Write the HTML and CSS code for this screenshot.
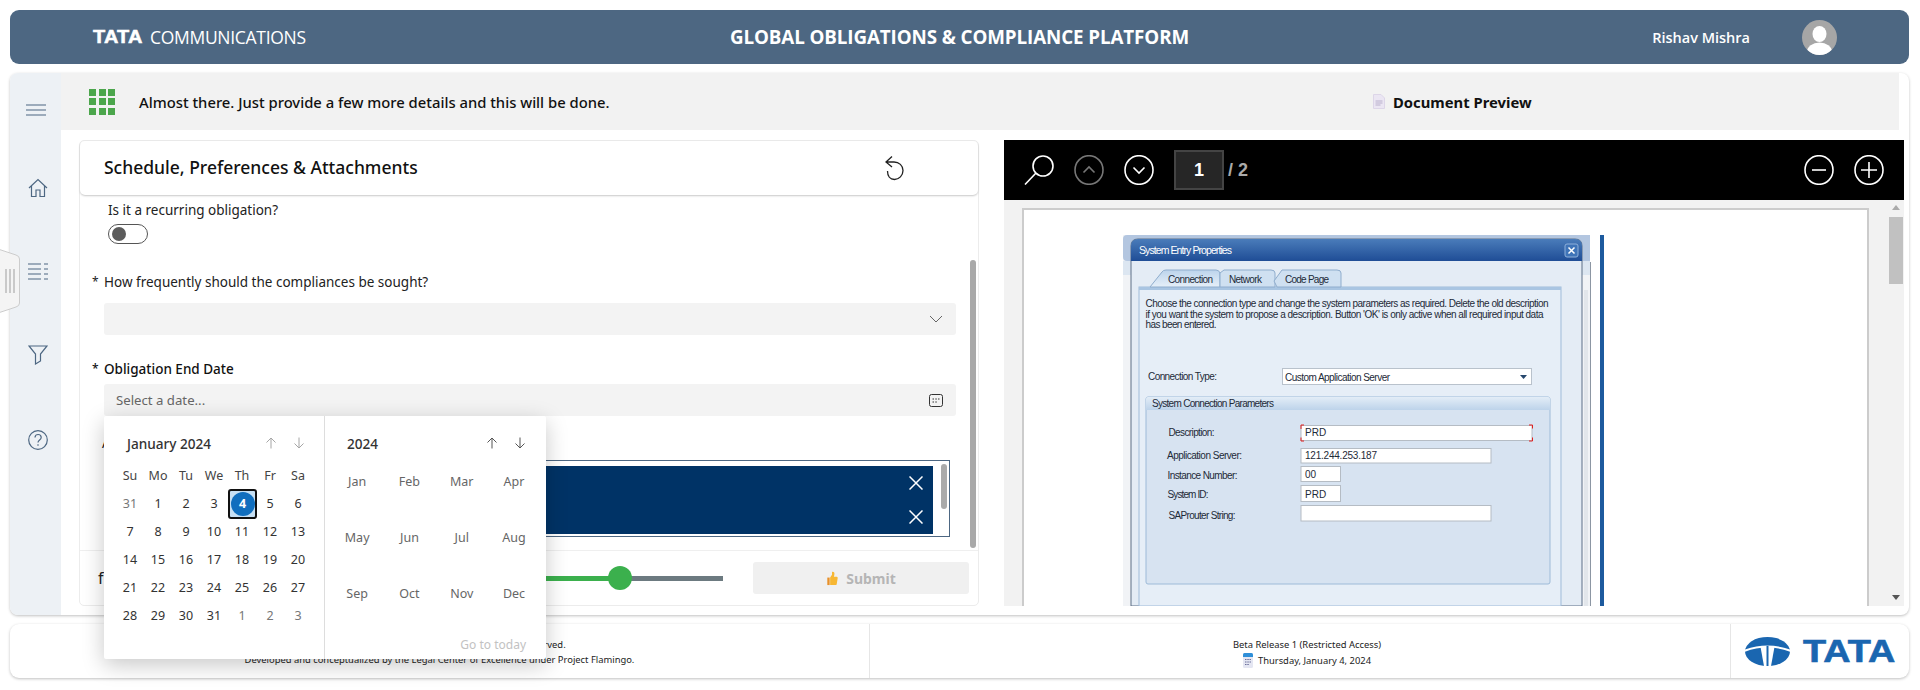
FILE: index.html
```html
<!DOCTYPE html>
<html lang="en">
<head>
    <meta charset="UTF-8">
    <meta name="viewport" content="width=device-width, initial-scale=1.0">
    <title>Global Obligations &amp; Compliance Platform</title>
    <link rel="stylesheet" href="styles.css">
</head>
<body>
<div class="app">
    <header class="topbar">
        <div class="brand"><span class="brand-tata">TATA</span><span class="brand-name">COMMUNICATIONS</span></div>
        <div class="app-title">GLOBAL OBLIGATIONS &amp; COMPLIANCE PLATFORM</div>
        <div class="user">
            <span class="user-name">Rishav Mishra</span>
            <svg class="avatar" viewBox="0 0 35 35">
                <defs><clipPath id="avatarClip"><circle cx="17.5" cy="17.5" r="17.5"/></clipPath></defs>
                <circle cx="17.5" cy="17.5" r="17.5" fill="#a6a6a6"/>
                <g clip-path="url(#avatarClip)" fill="#fff">
                    <ellipse cx="17.5" cy="14" rx="7" ry="8"/>
                    <ellipse cx="17.5" cy="32" rx="12.5" ry="9.5"/>
                </g>
            </svg>
        </div>
    </header>

    <main class="main">
        <nav class="sidebar">
            <svg class="nav-icon nav-menu" viewBox="0 0 20 12"><path d="M0 1h20M0 6h20M0 11h20"/></svg>
            <svg class="nav-icon nav-home" viewBox="0 0 20 20"><path d="M1 10 10 1.500 19 10M3.500 8v10.500h4.500v-6.500h4v6.500h4.500V8"/></svg>
            <svg class="nav-icon nav-list" viewBox="0 0 20 18"><path d="M0 1h13M16 1h4M0 6h13M16 6h4M0 11h13M16 11h4M0 16h13M16 16h4"/></svg>
            <svg class="nav-icon nav-filter" viewBox="0 0 20 20"><path d="M1 1h18l-6.500 8v7L7.500 19V9z"/></svg>
            <svg class="nav-icon nav-help" viewBox="0 0 20 20"><circle cx="10" cy="10" r="9.300"/><path d="M7 7.500c0-4 6.200-4 6.200 0 0 2.500-3.200 2.500-3.200 5"/><path d="M10 14.200v1.600"/></svg>
        </nav>
        <svg class="side-handle" viewBox="0 0 21 66">
            <path d="M-2 1 16 7q3.500 1 3.500 4v44q0 3-3.500 4L-2 65z" fill="#f4f4f4" stroke="#ccc"/>
            <path d="M6 21v24M10 21v24M14 21v24" stroke="#bbb" stroke-width="1.500"/>
        </svg>

        <div class="content">
            <div class="notice">
                <div class="notice-left">
                    <div class="grid-icon">
                        <i></i><i></i><i></i><i></i><i></i><i></i><i></i><i></i><i></i>
                    </div>
                    <span class="notice-text">Almost there. Just provide a few more details and this will be done.</span>
                </div>
                <div class="notice-right">
                    <svg class="doc-icon" viewBox="0 0 12 15">
                        <path d="M.5.5h7.500l3.500 3.500v10.500H.5z" fill="#ebe6f3" stroke="#ddd6e8"/>
                        <path d="M2.500 7h7M2.500 9h7M2.500 11h5" stroke="#b9b0cc"/>
                    </svg>
                    <span>Document Preview</span>
                </div>
            </div>

            <div class="panes">
                <section class="form-panel">
                    <div class="form-head">
                        <h2>Schedule, Preferences &amp; Attachments</h2>
                        <svg class="undo-icon" viewBox="0 0 22 26"><path d="M8 1.500 2 7l6 5M2 7h8c5 0 9 3.500 9 8.500S15 24.500 10.500 24.500 3.500 21 3.500 16"/></svg>
                    </div>

                    <div class="form-body">
                        <div class="field-label plain">Is it a recurring obligation?</div>
                        <div class="toggle"><i></i></div>

                        <div class="field-label starred q-freq"><span class="star">*</span>How frequently should the compliances be sought?</div>
                        <div class="input select-box">
                            <svg class="chev" viewBox="0 0 14 8"><path d="M1 1l6 6 6-6"/></svg>
                        </div>

                        <div class="field-label starred q-date"><span class="star">*</span>Obligation End Date</div>
                        <div class="date-wrap">
                            <div class="input date-box">
                                <span>Select a date...</span>
                                <svg class="cal-icon" viewBox="0 0 14 13"><rect x=".5" y=".5" width="13" height="12" rx="2"/><path d="M3.500 5h1.500M6.300 5h1.500M9 5h1.500M3.500 8h1.500M6.300 8h1.500"/></svg>
                            </div>
                            <div class="calendar">
                                <div class="cal-days">
                                    <div class="cal-head">
                                        <span class="cal-title">January 2024</span>
                                        <span class="cal-arrows">
                                            <svg class="arrow faded" viewBox="0 0 12 12"><path d="M6 11.500V1M1.500 5.500 6 1l4.500 4.500"/></svg>
                                            <svg class="arrow faded" viewBox="0 0 12 12"><path d="M6 .5V11M1.500 6.500 6 11l4.500-4.500"/></svg>
                                        </span>
                                    </div>
                                    <div class="day-grid">
                                        <span class="dow">Su</span><span class="dow">Mo</span><span class="dow">Tu</span><span class="dow">We</span><span class="dow">Th</span><span class="dow">Fr</span><span class="dow">Sa</span>
                                        <span class="off">31</span><span>1</span><span>2</span><span>3</span><span class="today"><b>4</b></span><span>5</span><span>6</span>
                                        <span>7</span><span>8</span><span>9</span><span>10</span><span>11</span><span>12</span><span>13</span>
                                        <span>14</span><span>15</span><span>16</span><span>17</span><span>18</span><span>19</span><span>20</span>
                                        <span>21</span><span>22</span><span>23</span><span>24</span><span>25</span><span>26</span><span>27</span>
                                        <span>28</span><span>29</span><span>30</span><span>31</span><span class="off">1</span><span class="off">2</span><span class="off">3</span>
                                    </div>
                                </div>
                                <div class="cal-months">
                                    <div class="cal-head">
                                        <span class="cal-title">2024</span>
                                        <span class="cal-arrows">
                                            <svg class="arrow" viewBox="0 0 12 12"><path d="M6 11.500V1M1.500 5.500 6 1l4.500 4.500"/></svg>
                                            <svg class="arrow" viewBox="0 0 12 12"><path d="M6 .5V11M1.500 6.500 6 11l4.500-4.500"/></svg>
                                        </span>
                                    </div>
                                    <div class="month-grid">
                                        <span>Jan</span><span>Feb</span><span>Mar</span><span>Apr</span>
                                        <span>May</span><span>Jun</span><span>Jul</span><span>Aug</span>
                                        <span>Sep</span><span>Oct</span><span>Nov</span><span>Dec</span>
                                    </div>
                                    <div class="go-today">Go to today</div>
                                </div>
                            </div>
                        </div>

                        <div class="field-label q-attach">A</div>
                        <div class="attach-box">
                            <div class="attach-files">
                                <div class="attach-row"><svg class="close-x" viewBox="0 0 14 14"><path d="M.5.5l13 13M13.500.5l-13 13"/></svg></div>
                                <div class="attach-row"><svg class="close-x" viewBox="0 0 14 14"><path d="M.5.5l13 13M13.500.5l-13 13"/></svg></div>
                            </div>
                            <div class="attach-thumb"></div>
                        </div>

                        <div class="form-scroll"></div>
                    </div>

                    <div class="form-foot">
                        <span class="foot-text">f</span>
                        <div class="slider">
                            <div class="slider-fill" style="width: 65.7%"></div>
                            <div class="slider-knob" style="left: 65.7%"></div>
                        </div>
                        <button class="submit" type="button">
                            <svg class="thumb-icon" viewBox="0 0 12 16"><path d="M1 7h2.500v8H1z" fill="#e8912a"/><path d="M4 7l2-3V1c2-.5 3 1 2.500 3L8 6h3c1 0 1.200 1 1 2l-1 6c-.2.800-.8 1-1.500 1H4z" fill="#f7b733"/></svg>
                            Submit
                        </button>
                    </div>
                </section>

                <section class="viewer">
                    <div class="viewer-bar">
                        <svg class="tool search" viewBox="0 0 30 30"><circle cx="19" cy="11" r="10"/><path d="M12 18 1 29.500"/></svg>
                        <svg class="tool dim" viewBox="0 0 30 30"><ellipse cx="15" cy="15" rx="14" ry="14.300"/><path d="M9.500 17.500 15 12l5.500 5.500"/></svg>
                        <svg class="tool" viewBox="0 0 30 30"><ellipse cx="15" cy="15" rx="14" ry="14.300"/><path d="M9.500 12.500 15 18l5.500-5.500"/></svg>
                        <span class="page-box">1</span>
                        <span class="page-total">/ 2</span>
                        <svg class="tool zoom-out" viewBox="0 0 30 30"><ellipse cx="15" cy="15" rx="14" ry="14.300"/><path d="M8 15h14"/></svg>
                        <svg class="tool" viewBox="0 0 30 30"><ellipse cx="15" cy="15" rx="14" ry="14.300"/><path d="M7 15h16M15 7v16"/></svg>
                    </div>
                    <div class="viewer-scroll">
                        <div class="doc-area">
                            <div class="doc-page">
                                <svg class="shot" viewBox="1123 235 482 371">
                                    <defs>
                                        <linearGradient id="titleBar" x1="0" y1="0" x2="0" y2="1"><stop offset="0" stop-color="#4a7cba"/><stop offset="1" stop-color="#1f4d96"/></linearGradient>
                                        <linearGradient id="tabOn" x1="0" y1="0" x2="0" y2="1"><stop offset="0" stop-color="#bcd4ec"/><stop offset="1" stop-color="#e6eff8"/></linearGradient>
                                        <linearGradient id="groupHead" x1="0" y1="0" x2="0" y2="1"><stop offset="0" stop-color="#e3edf7"/><stop offset="1" stop-color="#bdd3ea"/></linearGradient>
                                    </defs>
                                    <rect x="1123" y="235" width="478" height="371" fill="#f1f3f6"/>
                                    <rect x="1123" y="235" width="472" height="26" rx="4" fill="#b3c6e0"/>
                                    <rect x="1123" y="261" width="468" height="14" fill="#dce6f1"/>
                                    <rect x="1590" y="235" width="10" height="371" fill="#fff"/>
                                    <rect x="1590" y="262" width="1" height="344" fill="#8c96a3"/>
                                    <rect x="1600" y="235" width="4" height="371" fill="#1d5a9e"/>
                                    <rect x="1584" y="290" width="4" height="316" fill="#e2e6eb"/>
                                    <path d="M1131 606V246q0-7 7-7h437q7 0 7 7v360z" fill="#e4ecf5" stroke="#5c6f86"/>
                                    <path d="M1131 261v-15q0-7 7-7h437q7 0 7 7v15z" fill="url(#titleBar)"/>
                                    <text class="s-title" x="1139" y="254" textLength="93">System Entry Properties</text>
                                    <rect x="1565" y="244" width="13" height="13" rx="2" fill="#3f74b8" stroke="#8fb0da"/>
                                    <path d="M1568.500 247.500l6 6M1574.500 247.500l-6 6" stroke="#fff" stroke-width="1.500"/>

                                    <rect x="1139" y="287" width="422" height="319" fill="#e6eef7" stroke="#9fbbd9"/>
                                    <rect x="1139" y="287" width="422" height="3" fill="#a9c5e2"/>
                                    <path d="M1150 287l12-15q1-2 4-2h50q3 0 4 3v14z" fill="url(#tabOn)" stroke="#8fadcd"/>
                                    <path d="M1220 287v-14l4-3h47q4 0 4 3v14z" fill="#cfe0f1" stroke="#8fadcd"/>
                                    <path d="M1277 287l-3-6 8-11h55q4 0 4 3v14z" fill="#cfe0f1" stroke="#8fadcd"/>
                                    <text class="s-text" x="1168" y="283" textLength="45">Connection</text>
                                    <text class="s-text" x="1229" y="283" textLength="33">Network</text>
                                    <text class="s-text" x="1285" y="283" textLength="44">Code Page</text>

                                    <text class="s-text" x="1145.500" y="306.500" textLength="403">Choose the connection type and change the system parameters as required. Delete the old description</text>
                                    <text class="s-text" x="1145.500" y="317.500" textLength="398">if you want the system to propose a description. Button 'OK' is only active when all required input data</text>
                                    <text class="s-text" x="1145.500" y="328" textLength="71">has been entered.</text>

                                    <text class="s-text" x="1148" y="380" textLength="69">Connection Type:</text>
                                    <rect x="1282.500" y="368.500" width="249" height="16" fill="#fff" stroke="#b9c2cc"/>
                                    <text class="s-text" x="1285" y="381" textLength="105">Custom Application Server</text>
                                    <path d="M1520 375h7l-3.500 4z" fill="#26476d"/>

                                    <rect x="1146" y="397" width="404" height="187" rx="2" fill="#d7e3f1" stroke="#9dbad8"/>
                                    <path d="M1146 410v-11q0-2 2-2h400q2 0 2 2v11z" fill="url(#groupHead)"/>
                                    <text class="s-text" x="1152" y="407" textLength="122">System Connection Parameters</text>

                                    <text class="s-text" x="1168.500" y="436" textLength="46">Description:</text>
                                    <rect class="s-input" x="1301" y="425.500" width="231" height="15"/>
                                    <text class="s-text" x="1305" y="436">PRD</text>
                                    <path d="M1301 429v-4h3M1529 425h3.500v3.500M1301 437.500v3.500h3M1529 441h3.500v-3.500" fill="none" stroke="#e02020"/>

                                    <text class="s-text" x="1167" y="459" textLength="75">Application Server:</text>
                                    <rect class="s-input" x="1301" y="448.500" width="190" height="14.500"/>
                                    <text class="s-text" x="1305" y="459" textLength="72">121.244.253.187</text>

                                    <text class="s-text" x="1167.500" y="478.500" textLength="70">Instance Number:</text>
                                    <rect class="s-input" x="1301" y="466.500" width="39.500" height="15"/>
                                    <text class="s-text" x="1305" y="478">00</text>

                                    <text class="s-text" x="1167.500" y="497.500" textLength="41">System ID:</text>
                                    <rect class="s-input" x="1301" y="485.500" width="39.500" height="16"/>
                                    <text class="s-text" x="1305" y="497.500">PRD</text>

                                    <text class="s-text" x="1168.500" y="519" textLength="67">SAProuter String:</text>
                                    <rect class="s-input" x="1301" y="505.500" width="190" height="15.500"/>
                                </svg>
                            </div>
                        </div>
                        <div class="vbar">
                            <i class="vbar-up"></i>
                            <div class="vbar-thumb"></div>
                            <i class="vbar-down"></i>
                        </div>
                    </div>
                </section>
            </div>
        </div>
    </main>

    <footer class="footer">
        <div class="foot-cell foot-legal">
            <div>© 2024 Tata Communications Limited. All rights reserved.</div>
            <div>Developed and conceptualized by the Legal Center of Excellence under Project Flamingo.</div>
        </div>
        <div class="foot-cell foot-release">
            <div>Beta Release 1 (Restricted Access)</div>
            <div class="foot-date">
                <svg class="mini-cal" viewBox="0 0 10 15"><rect width="10" height="15" rx="1.500" fill="#e4e6f2"/><path d="M0 1.500Q0 0 1.500 0h7Q10 0 10 1.500V4H0z" fill="#2f8fd8"/><path d="M2 6.500h1.500M4.300 6.500h1.500M6.500 6.500h1.500M2 9h1.500M4.300 9h1.500M6.500 9h1.500M2 11.500h1.500M4.300 11.500h1.500" stroke="#6b6f9a"/></svg>
                Thursday, January 4, 2024
            </div>
        </div>
        <div class="foot-logo">
            <svg class="tata-mark" viewBox="0 0 45 29">
                <ellipse cx="22.500" cy="14.500" rx="22.500" ry="14.500" fill="#1a66b0"/>
                <path d="M-1 14Q22.500 5 46 14" fill="none" stroke="#fff" stroke-width="2"/>
                <path d="M15.500 10 19 29h7l3.500-19Q22.500 8.500 15.500 10z" fill="#fff"/>
                <path d="M21.500 8.800h2V31h-2z" fill="#1a66b0"/>
            </svg>
            <span class="tata-word">TATA</span>
        </div>
    </footer>
</div>
</body>
</html>
```

FILE: styles.css
```css
* {
    box-sizing: border-box;
}

body {
    margin: 0;
    background: #fff;
    font-family: "Noto Sans", "Open Sans", Arial, sans-serif;
    color: #222;
    overflow: hidden;
}

.app {
    display: flex;
    flex-direction: column;
    gap: 9px;
    width: 1920px;
    height: 690px;
    padding: 10px 11px 0 10px;
}

/* top bar */
.topbar {
    display: grid;
    grid-template-columns: 1fr auto 1fr;
    align-items: center;
    height: 54px;
    background: #4d6782;
    border-radius: 9px;
    color: #fff;
}

.brand {
    display: flex;
    align-items: center;
    gap: 7px;
    padding-left: 83px;
}

.brand-tata {
    font-family: "Liberation Sans", Arial, sans-serif;
    font-weight: 700;
    font-size: 17.5px;
    letter-spacing: 0.2px;
    -webkit-text-stroke: 0.5px #fff;
    transform: scaleX(1.14);
    transform-origin: left center;
    width: 50px;
}

.brand-name {
    font-family: "Open Sans", sans-serif;
    font-size: 17.5px;
    letter-spacing: -0.3px;
}

.app-title {
    font-family: "Open Sans", sans-serif;
    font-weight: 700;
    font-size: 18.8px;
    letter-spacing: -0.1px;
}

.user {
    display: flex;
    align-items: center;
    justify-content: flex-end;
    gap: 52px;
    padding-right: 72px;
}

.user-name {
    font-family: "Open Sans", sans-serif;
    font-weight: 600;
    font-size: 14.5px;
}

.avatar {
    width: 35px;
    height: 35px;
}

/* main card */
.main {
    position: relative;
    display: flex;
    height: 542px;
    background: #fff;
    border-radius: 8px;
    box-shadow: 0 1px 3px rgba(0, 0, 0, 0.25);
}

.sidebar {
    display: flex;
    flex-direction: column;
    align-items: flex-start;
    flex: 0 0 51px;
    padding-left: 18px;
    background: #edf1f5;
    border-radius: 8px 0 0 8px;
}

.nav-icon {
    fill: none;
    stroke: #4d6782;
    stroke-width: 1.2;
}

.nav-menu {
    width: 20px;
    height: 12px;
    margin: 31px 0 0 -2px;
}

.nav-home {
    width: 20px;
    height: 20px;
    margin-top: 62px;
}

.nav-list {
    width: 20px;
    height: 18px;
    margin-top: 65px;
}

.nav-filter {
    width: 20px;
    height: 20px;
    margin-top: 64px;
}

.nav-help {
    width: 20px;
    height: 20px;
    margin-top: 65px;
}

.side-handle {
    position: absolute;
    left: -10px;
    top: 175px;
    width: 21px;
    height: 66px;
}

.content {
    display: flex;
    flex-direction: column;
    flex: 1;
    min-width: 0;
}

/* notice row */
.notice {
    display: grid;
    grid-template-columns: 1312px 1fr;
    align-items: center;
    height: 57px;
    margin-right: 10px;
    background: #f2f2f2;
    font-size: 14.8px;
    font-weight: 500;
    color: #111;
}

.notice-left {
    display: flex;
    align-items: center;
    gap: 24px;
    padding-left: 28px;
}

.grid-icon {
    display: grid;
    grid-template-columns: repeat(3, 7px);
    grid-auto-rows: 7px;
    gap: 2.5px;
}

.grid-icon i {
    background: #4ca64c;
}

.notice-right {
    display: flex;
    align-items: center;
    gap: 8px;
    font-weight: 700;
}

.doc-icon {
    width: 12px;
    height: 15px;
}

/* panes */
.panes {
    display: flex;
    flex: 1;
    min-height: 0;
    padding: 10px 0 9px 18px;
    gap: 25px;
}

.form-panel {
    display: flex;
    flex-direction: column;
    flex: 0 0 900px;
    border: 1px solid #ececec;
    border-radius: 5px;
}

.form-head {
    display: flex;
    align-items: center;
    justify-content: space-between;
    flex: 0 0 54px;
    padding: 0 72px 3px 24px;
    border-radius: 5px;
    box-shadow: 0 1px 2px rgba(0, 0, 0, 0.22);
}

.form-head h2 {
    margin: 0;
    font-size: 17.5px;
    font-weight: 500;
    color: #111;
}

.undo-icon {
    width: 22px;
    height: 26px;
    margin-top: 3px;
    fill: none;
    stroke: #222;
    stroke-width: 1.3;
}

.form-body {
    position: relative;
    flex: 1;
    padding-left: 24px;
}

.field-label {
    height: 20px;
    font-size: 13.5px;
    line-height: 20px;
    color: #222;
}

.plain {
    margin-top: 5px;
    padding-left: 4px;
}

.starred {
    display: flex;
    margin-left: -12px;
}

.star {
    flex: 0 0 12px;
    font-size: 12px;
}

.q-freq {
    margin-top: 28px;
}

.q-date {
    margin-top: 24px;
    font-weight: 500;
    color: #111;
}

.q-attach {
    margin-top: 17px;
    margin-left: -2px;
    color: #111;
}

.toggle {
    width: 40px;
    height: 20px;
    margin: 4px 0 0 4px;
    padding: 2px 3px;
    border: 1px solid #555;
    border-radius: 10px;
}

.toggle i {
    display: block;
    width: 14px;
    height: 14px;
    border-radius: 50%;
    background: #5c5c5c;
}

.input {
    display: flex;
    align-items: center;
    justify-content: space-between;
    width: 852px;
    height: 32px;
    padding: 0 13px 0 12px;
    background: #f3f3f3;
    border-radius: 3px;
    font-size: 13.2px;
    color: #666;
}

.select-box {
    margin-top: 11px;
    justify-content: flex-end;
    padding-right: 13px;
}

.chev {
    width: 14px;
    height: 8px;
    fill: none;
    stroke: #666;
}

.date-wrap {
    position: relative;
    margin-top: 5px;
}

.cal-icon {
    width: 14px;
    height: 13px;
    fill: none;
    stroke: #333;
}

/* calendar popup */
.calendar {
    position: absolute;
    left: 0;
    top: 100%;
    z-index: 5;
    display: flex;
    width: 442px;
    height: 243px;
    background: #fff;
    border-radius: 2px;
    box-shadow: 0 6px 22px rgba(0, 0, 0, 0.22);
    font-size: 12.5px;
    color: #333;
}

.cal-days {
    flex: 0 0 221px;
    padding: 14px 0 0 12px;
    border-right: 1px solid #ddd;
}

.cal-months {
    position: relative;
    flex: 1;
    padding: 14px 0 0 6px;
}

.cal-head {
    display: flex;
    align-items: center;
    justify-content: space-between;
    height: 26px;
    padding: 0 19px 0 11px;
}

.cal-months .cal-head {
    padding: 0 20px 0 16px;
}

.cal-title {
    font-size: 13.6px;
    font-weight: 500;
    color: #333;
}

.cal-arrows {
    display: flex;
    gap: 16px;
}

.arrow {
    width: 12px;
    height: 12px;
    fill: none;
    stroke: #555;
}

.arrow.faded {
    stroke: #a6a6a6;
}

.day-grid {
    display: grid;
    grid-template-columns: repeat(7, 28px);
    grid-auto-rows: 28px;
    margin-top: 5.5px;
    text-align: center;
    line-height: 28px;
}

.dow {
    color: #444;
}

.off {
    color: #777;
}

.today {
    display: flex;
    align-items: center;
    justify-content: center;
    width: 29px;
    height: 30px;
    margin: -1px 0 0 0;
    background: #c7e0f4;
    border: 2px solid #111;
    border-radius: 3px;
}

.today b {
    width: 24px;
    height: 24px;
    border-radius: 50%;
    background: #106ebe;
    color: #fff;
    line-height: 24px;
}

.month-grid {
    display: grid;
    grid-template-columns: repeat(4, 52.3px);
    grid-auto-rows: 56px;
    margin-top: -2.5px;
    text-align: center;
    line-height: 56px;
    color: #666;
}

.go-today {
    position: absolute;
    right: 20px;
    bottom: 6px;
    font-size: 12px;
    color: #c2c2c2;
}

/* attachments */
.attach-box {
    position: relative;
    width: 846px;
    height: 77px;
    margin-top: 7px;
    padding-top: 5px;
    border: 1px solid #4d6782;
}

.attach-files {
    width: 828px;
    height: 68px;
    background: #003366;
}

.attach-row {
    display: flex;
    align-items: center;
    justify-content: flex-end;
    height: 34px;
    padding-right: 10px;
}

.close-x {
    width: 14px;
    height: 14px;
    fill: none;
    stroke: #fff;
    stroke-width: 1.5;
}

.attach-thumb {
    position: absolute;
    right: 2px;
    top: 3px;
    width: 6px;
    height: 45px;
    border-radius: 3px;
    background: #aaa;
}

.form-scroll {
    position: absolute;
    right: 2px;
    top: 65px;
    width: 6px;
    height: 288px;
    border-radius: 3px;
    background: #a9a9a9;
}

/* form footer */
.form-foot {
    display: flex;
    align-items: center;
    flex: 0 0 55px;
    padding: 0 9px 0 18px;
    border-top: 1px solid #efefef;
}

.foot-text {
    font-size: 16px;
}

.slider {
    position: relative;
    width: 300px;
    height: 5px;
    margin-left: auto;
    background: #6c7a80;
}

.slider-fill {
    height: 100%;
    background: #3bb04d;
}

.slider-knob {
    position: absolute;
    top: -10px;
    width: 24px;
    height: 24px;
    margin-left: -12px;
    border-radius: 50%;
    background: #3bb04d;
}

.submit {
    display: flex;
    align-items: center;
    justify-content: center;
    gap: 8px;
    width: 216px;
    height: 32px;
    margin-left: 30px;
    background: #f0f0f0;
    border: none;
    border-radius: 3px;
    font-family: inherit;
    font-size: 14px;
    font-weight: 700;
    color: #b5b5b5;
}

.thumb-icon {
    width: 12px;
    height: 15px;
}

/* document viewer */
.viewer {
    display: flex;
    flex-direction: column;
    flex: 0 0 900px;
}

.viewer-bar {
    display: flex;
    align-items: center;
    gap: 20px;
    flex: 0 0 60px;
    padding: 0 20px;
    background: #000;
    color: #fff;
}

.tool {
    flex: 0 0 30px;
    width: 30px;
    height: 30px;
    fill: none;
    stroke: #fff;
    stroke-width: 1.6;
}

.tool.dim {
    stroke: #777;
}

.tool.zoom-out {
    margin-left: auto;
}

.page-box {
    width: 50px;
    height: 40px;
    background: #262626;
    border: 2px solid #444;
    font-family: "Liberation Sans", Arial, sans-serif;
    font-size: 18px;
    font-weight: 700;
    line-height: 36px;
    text-align: center;
}

.page-total {
    margin-left: -16px;
    font-family: "Liberation Sans", Arial, sans-serif;
    font-size: 18px;
    font-weight: 700;
    color: #aaa;
}

.viewer-scroll {
    display: flex;
    flex: 1;
    min-height: 0;
    background: #f2f2f2;
}

.doc-area {
    flex: 1;
    padding: 8px 19px 0 18px;
}

.doc-page {
    height: 100%;
    padding: 25px 0 0 99px;
    background: #fff;
    border: 2px solid #ccc;
    border-bottom: none;
    overflow: hidden;
}

.shot {
    display: block;
    width: 482px;
    height: 371px;
}

.s-text {
    font-family: "Liberation Sans", Arial, sans-serif;
    font-size: 10px;
    fill: #1d2a38;
}

.s-title {
    font-family: "Liberation Sans", Arial, sans-serif;
    font-size: 10.5px;
    fill: #fff;
}

.s-input {
    fill: #fff;
    stroke: #b5bcc4;
}

.vbar {
    display: flex;
    flex-direction: column;
    align-items: center;
    flex: 0 0 16px;
    padding: 5px 0 6px;
}

.vbar-up,
.vbar-down {
    width: 0;
    height: 0;
    border-left: 4px solid transparent;
    border-right: 4px solid transparent;
}

.vbar-up {
    border-bottom: 5px solid #aaa;
}

.vbar-down {
    margin-top: auto;
    border-top: 5px solid #555;
}

.vbar-thumb {
    width: 14px;
    height: 67px;
    margin-top: 7px;
    background: #c1c1c1;
}

/* footer */
.footer {
    display: flex;
    height: 54px;
    border-radius: 9px;
    box-shadow: 0 1px 3px rgba(0, 0, 0, 0.25);
    font-size: 9.4px;
    color: #222;
}

.foot-cell {
    display: flex;
    flex-direction: column;
    align-items: center;
    justify-content: center;
    line-height: 15px;
    padding-top: 2px;
}

.foot-legal {
    flex: 0 0 860px;
    border-right: 1px solid #e6e6e6;
}

.foot-release {
    flex: 0 0 860px;
    padding-left: 14px;
}

.foot-date {
    display: flex;
    align-items: center;
    gap: 5px;
    margin-top: 1px;
}

.mini-cal {
    width: 10px;
    height: 15px;
}

.foot-logo {
    display: flex;
    align-items: center;
    flex: 1;
    gap: 13px;
    padding-left: 14px;
    border-left: 1px solid #e6e6e6;
}

.tata-mark {
    flex: 0 0 45px;
    width: 45px;
    height: 29px;
}

.tata-word {
    font-family: "Liberation Sans", Arial, sans-serif;
    font-size: 31px;
    font-weight: 700;
    line-height: 1;
    color: #1a66b0;
    -webkit-text-stroke: 0.6px #1a66b0;
    transform: scaleX(1.22);
    transform-origin: left center;
}
```
